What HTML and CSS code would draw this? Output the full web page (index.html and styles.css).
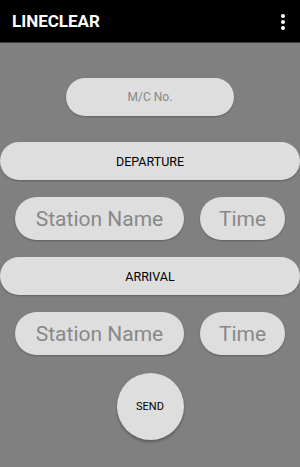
FILE: index.html
```html
<!DOCTYPE html>
<html lang="en">
<head>
  <meta charset="UTF-8" />
  <meta name="viewport" content="width=device-width, initial-scale=1" />
  <title>LineClear</title>
  <link rel="stylesheet" href="styles.css">
</head>
<body>
  <div class="app-bar">
    <h1 class="app-title">LINECLEAR</h1>
    <button class="menu-button" aria-label="More options">
      <svg width="4" height="16" viewBox="0 0 4 16">
        <circle cx="2" cy="2" r="2" fill="#fff" />
        <circle cx="2" cy="8" r="2" fill="#fff" />
        <circle cx="2" cy="14" r="2" fill="#fff" />
      </svg>
    </button>
  </div>

  <div class="content">
    <input class="pill mc-input" type="text" placeholder="M/C No." />

    <button class="pill section-button">DEPARTURE</button>
    <div class="field-row">
      <input class="pill station-input" type="text" placeholder="Station Name" />
      <input class="pill time-input" type="text" placeholder="Time" />
    </div>

    <button class="pill section-button">ARRIVAL</button>
    <div class="field-row">
      <input class="pill station-input" type="text" placeholder="Station Name" />
      <input class="pill time-input" type="text" placeholder="Time" />
    </div>

    <button class="send-button">SEND</button>
  </div>
</body>
</html>
```

FILE: styles.css
```css
* {
  margin: 0;
  padding: 0;
  box-sizing: border-box;
}

body {
  font-family: Roboto, "Noto Sans", sans-serif;
  background-color: #808080;
  height: 100vh;
  overflow: hidden;
}

.app-bar {
  height: 43px;
  background-color: #000;
  border-bottom: 1px solid #3a3a3a;
  display: flex;
  align-items: center;
  justify-content: space-between;
  padding: 0 15px 0 12px;
}

.app-title {
  color: #fff;
  font-size: 17px;
  font-weight: 700;
}

.menu-button {
  background: none;
  border: none;
  display: flex;
  padding-top: 1px;
}

.content {
  display: flex;
  flex-direction: column;
  align-items: center;
  padding-top: 35px;
}

.pill {
  background-color: #dedede;
  border: none;
  border-radius: 22px;
  font-family: Roboto, sans-serif;
  outline: none;
  text-align: center;
  box-shadow: 0 1px 2px rgba(0, 0, 0, 0.25);
}

.pill::placeholder {
  color: #888;
}

.mc-input {
  width: 168px;
  height: 38px;
  font-size: 12px;
}

.section-button {
  width: 300px;
  height: 38px;
  margin-top: 26px;
  font-size: 12.5px;
  color: #000;
  border-radius: 19px;
}

.field-row {
  display: flex;
  gap: 16px;
  margin-top: 17px;
  margin-bottom: 17px;
}

.station-input {
  width: 169px;
  height: 43px;
  font-size: 21px;
}

.time-input {
  width: 85px;
  height: 43px;
  font-size: 21px;
}

.field-row + .section-button {
  margin-top: 0;
}

.send-button {
  width: 67px;
  height: 67px;
  margin-top: 1px;
  border: none;
  border-radius: 50%;
  background-color: #dedede;
  font-family: Roboto, sans-serif;
  font-size: 11px;
  color: #000;
  box-shadow: 0 2px 3px rgba(0, 0, 0, 0.3);
}
```
